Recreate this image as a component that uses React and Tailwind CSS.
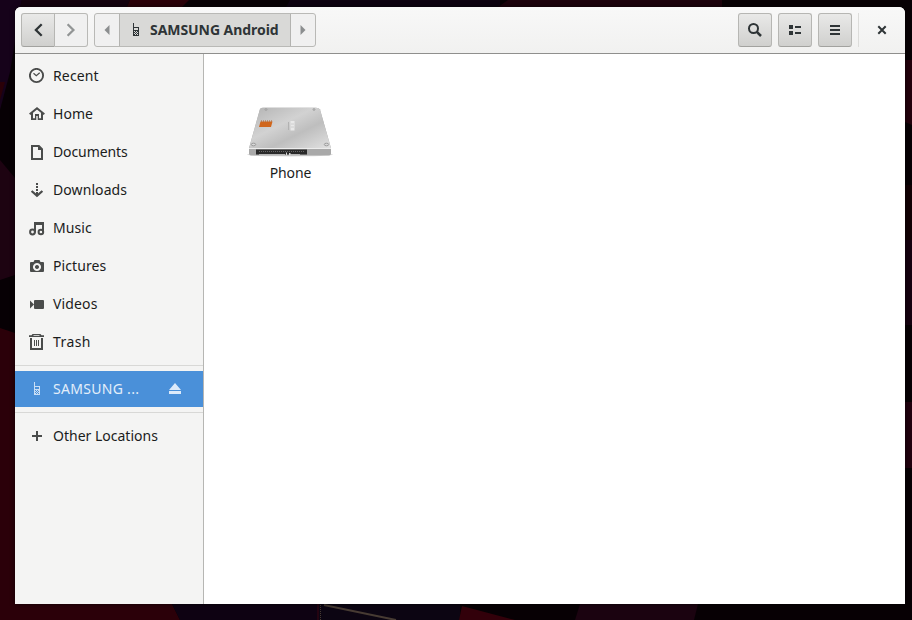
import React from "react";

const BODY = "font-['Noto_Sans','Open_Sans',sans-serif]";

function Icon({ children, className = "text-[#4a4c4b]", size = 16 }) {
  return (
    <svg width={size} height={size} viewBox="0 0 16 16" fill="currentColor" className={"shrink-0 " + className}>
      {children}
    </svg>
  );
}

const Phone = () => (
  <g shapeRendering="crispEdges">
    <path d="M5 1h1v4h-1z" />
    <path fillRule="evenodd" d="M5 5h6v9h-6zM6 6v2h4v-2zM6 9v1h1v-1zM8 9v1h1v-1zM7 10v1h1v-1zM9 10v1h1v-1zM6 11v1h1v-1zM8 11v1h1v-1zM7 12v1h1v-1zM9 12v1h1v-1z" />
  </g>
);

const icons = {
  recent: (
    <>
      <circle cx="7.500" cy="7.500" r="6.600" fill="none" stroke="currentColor" strokeWidth="1.900" />
      <path d="M4.500 5.200L7.300 7.800L10.700 4.800" fill="none" stroke="currentColor" strokeWidth="1.200" />
    </>
  ),
  home: (
    <>
      <path d="M.7 8.300L8 2.300L15.300 8.300" fill="none" stroke="currentColor" strokeWidth="2.100" />
      <path d="M2 7h2v5.200h2v-4.200h4v4.200h2v-5.200h2v7h-5.300v-4h-1.400v4h-5.300z" />
    </>
  ),
  documents: (
    <path fillRule="evenodd" d="M2 1h8.300l3.700 3.700v11.300h-12zM4 3v11h8v-8h-3v-3z" />
  ),
  downloads: (
    <>
      <path d="M7 1h2v2h-2zM7 4h2v2h-2zM7 7h2v2h-2zM7 10h2v3h-2z" />
      <path d="M2.600 9L8 13.800L13.400 9" fill="none" stroke="currentColor" strokeWidth="2.300" />
    </>
  ),
  music: (
    <>
      <path d="M5 2h10v10h-2v-7h-6v7.500h-2z" />
      <circle cx="3.500" cy="12" r="2.400" fill="none" stroke="currentColor" strokeWidth="2" />
      <circle cx="11.900" cy="12" r="2.300" fill="none" stroke="currentColor" strokeWidth="2" />
    </>
  ),
  pictures: (
    <path fillRule="evenodd" d="M5.500 2h5l1 2h2.500q1 0 1 1v8q0 1-1 1h-12q-1 0-1-1v-8q0-1 1-1h2.500zM8 5a4 4 0 1 0 .01 0zM8 7a2 2 0 1 1-.01 0z" />
  ),
  videos: <path d="M1 4.500l4 4l-4 4zM6 4h8q1 0 1 1v7q0 1-1 1h-8q-1 0-1-1v-7q0-1 1-1z" />,
  trash: (
    <>
      <path fillRule="evenodd" d="M3.500 0h8l1 1.200h2.500v1.800h-15v-1.800h2.500zM4.500 1h6v.7h-6z" />
      <path d="M2 4v11h11v-11" fill="none" stroke="currentColor" strokeWidth="2" />
      <path d="M5 6h1v6h-1zM7 6h1v6h-1zM9 6h1v6h-1z" />
    </>
  ),
  plus: <path d="M7 3h2v4h4v2h-4v4h-2v-4h-4v-2h4z" />,
};

const places = [
  ["recent", "Recent", "tracking-[0.15px]"],
  ["home", "Home", "tracking-[0.050px]"],
  ["documents", "Documents", "tracking-[-0.1px]"],
  ["downloads", "Downloads", "tracking-[0.080px]"],
  ["music", "Music", "tracking-[0.1px]"],
  ["pictures", "Pictures", "tracking-[0.1px]"],
  ["videos", "Videos", "tracking-[0.15px]"],
  ["trash", "Trash", "tracking-[0.4px]"],
];

function Place({ icon, label, spacing = "" }) {
  return (
    <li className="flex h-[38px] items-center gap-2 pl-[14px] text-[#1b1c1c]">
      <Icon>{icons[icon]}</Icon>
      <span className={"pb-[2px] " + spacing}>{label}</span>
    </li>
  );
}

function ToolButton({ children, label, className = "" }) {
  return (
    <button
      aria-label={label}
      className={"flex h-[34px] w-[34px] items-center justify-center rounded-[3px] border border-[#b6b6b3] border-b-[#a2a29f] bg-linear-to-b from-[#e9e9e8] to-[#d0d0ce] text-[#2e3436] " + className}
    >
      {children}
    </button>
  );
}

function Drive() {
  return (
    <svg width="88" height="54" viewBox="0 0 88 54">
      <defs>
        <linearGradient id="metal" x1="0" y1="0" x2="1" y2="1">
          <stop offset="0" stopColor="#b2b2b2" />
          <stop offset=".4" stopColor="#d2d2d2" />
          <stop offset=".62" stopColor="#bebebe" />
          <stop offset="1" stopColor="#e2e2e2" />
        </linearGradient>
      </defs>
      <ellipse cx="44" cy="49.500" rx="43" ry="2" fill="#000" opacity=".14" />
      <path d="M14 4Q15 2.700 17 2.700H70Q73 2.700 74 4.500L85 43V48.500Q85 50.500 83 50.500H5Q3 50.500 3 48.500V43Z" fill="#a9a9a9" />
      <path d="M14 4Q15 2.700 17 2.700H70Q73 2.700 74 4.500L85 43.500H3Z" fill="url(#metal)" />
      <path d="M3 43.500H85" stroke="#ececec" strokeWidth="1" />
      <path d="M10 44.500H61V49.500H10Z" fill="#292929" />
      <path d="M13 46.500H59" stroke="#666" strokeWidth="1" strokeDasharray="1 1" />
      <path d="M13 49.500H39M44 49.500H54" stroke="#b5b5b5" strokeWidth="1" />
      <path d="M40 47.500h1v2.500h-1zM43 48h1.500v2.500h-1.500z" fill="#d9d9d9" />
      <path d="M14.500 16.500H26.500L25 22H13Z" fill="#d0661c" />
      <path d="M15 16H27" stroke="#a85c2a" strokeWidth="1" strokeDasharray="1 1" />
      <path d="M44.500 16h4v9.500h-4z" fill="#e9e9e9" />
      <path d="M45 19h3M45 22h3" stroke="#cecece" />
      <path d="M42.500 17v8" stroke="#b2b2b2" />
      <g fill="#d8d8d8" stroke="#8e8e8e" strokeWidth=".8">
        <circle cx="20" cy="4.500" r=".9" />
        <circle cx="68" cy="4.500" r=".9" />
        <ellipse cx="7.500" cy="39.500" rx="2.200" ry="1.300" />
        <ellipse cx="80.500" cy="39.500" rx="2.200" ry="1.300" />
      </g>
    </svg>
  );
}

function Wallpaper() {
  return (
    <svg width="912" height="620" viewBox="0 0 912 620" className="absolute inset-0">
      <rect width="912" height="620" fill="#070004" />
      <path d="M0 0H22L10 72L0 110Z" fill="#16021a" />
      <path d="M0 82L5 82L0 100Z" fill="#2a0008" />
      <path d="M0 160L15 178V275L0 280Z" fill="#1d0311" />
      <path d="M0 328L15 333V604H172L180 620H0Z" fill="#2b0009" />
      <path d="M22 0H130L127 7H20Z" fill="#14020e" />
      <path d="M130 0H189L182 7H127Z" fill="#2a0008" />
      <path d="M290 0H500V7H286Z" fill="#0d0210" />
      <path d="M508 0H722V7H498Z" fill="#1c020c" />
      <path d="M172 604H318V620H180Z" fill="#0e0212" />
      <path d="M318 604H460V620H318Z" fill="#0c0512" />
      <path d="M324 605L396 620" fill="none" stroke="#473b33" strokeWidth="2" />
      <path d="M320.500 605V620" stroke="#473b33" strokeWidth="1" strokeDasharray="1 1" />
      <path d="M318 604V620" stroke="#3a0410" />
      <path d="M462 606L515 620H459Z" fill="#32000a" />
      <path d="M580 604H698L694 620H575Z" fill="#1b0310" />
      <path d="M905 60H912V125L905 122Z" fill="#23000c" />
      <path d="M905 185H912V240H905Z" fill="#120004" />
      <path d="M905 240H912V325H905Z" fill="#15000f" />
      <path d="M905 402H912V468H905Z" fill="#20000e" />
    </svg>
  );
}

export default function App() {
  return (
    <div className={"relative h-[620px] w-[912px] overflow-hidden bg-black pl-[15px] pt-[7px] text-[14px] " + BODY}>
      <Wallpaper />
      <div className="relative flex h-[597px] w-[890px] flex-col overflow-hidden rounded-t-[6px] bg-white shadow-[0_0_5px_#000000a0]">
        <header className="flex h-[47px] shrink-0 items-start border-b border-[#8f8f8d] bg-linear-to-b from-[#f8f8f8] to-[#f1f1f0] pl-[6px] pt-[6px]">
          <div className="flex">
            <ToolButton label="Back" className="rounded-r-none">
              <svg width="16" height="16" fill="none" stroke="currentColor" strokeWidth="2.300"><path d="M11.700 2.300L5.900 8L11.700 13.700" /></svg>
            </ToolButton>
            <button aria-label="Forward" className="flex h-[34px] w-[33px] items-center justify-center rounded-r-[3px] border border-l-0 border-[#b9b9b6] bg-[#f0f0f0] text-[#929595]">
              <svg width="16" height="16" fill="none" stroke="currentColor" strokeWidth="2.300"><path d="M4.600 2.300L10.400 8L4.600 13.700" /></svg>
            </button>
          </div>
          <nav className="ml-[6px] flex h-[34px] w-[222px] rounded-[3px] border border-[#b9b9b6] bg-[#f0f0f0] text-[#8b8e8f]">
            <div className="flex w-[24px] items-center justify-center">
              <svg width="6" height="10" fill="currentColor"><path d="M5.500 0V10L.5 5Z" /></svg>
            </div>
            <div className="flex w-[172px] items-center border-x border-[#b3b3b0] bg-[#d9d9d7] pl-[8px] font-bold text-[#2e3436]">
              <Icon className="text-[#2e3436]"><Phone /></Icon>
              <span className="ml-[6px] whitespace-nowrap pb-[2px] tracking-[-0.060px]">SAMSUNG Android</span>
            </div>
            <div className="flex w-[24px] items-center justify-center">
              <svg width="6" height="10" fill="currentColor"><path d="M.5 0V10L5.500 5Z" /></svg>
            </div>
          </nav>
          <div className="ml-auto flex gap-[6px]">
            <ToolButton label="Search">
              <svg width="16" height="16" fill="none" stroke="currentColor"><circle cx="6.500" cy="6.500" r="4.500" strokeWidth="2" /><path d="M9.800 9.800L14 14" strokeWidth="2.500" /></svg>
            </ToolButton>
            <ToolButton label="View">
              <svg width="16" height="16" fill="currentColor"><path d="M2 3h4v4H2zM2 9h4v4H2zM8 4h6v2H8zM8 10h6v2H8z" /></svg>
            </ToolButton>
            <ToolButton label="Menu">
              <svg width="16" height="16" fill="currentColor"><path d="M3 3h10v2H3zM3 7h10v2H3zM3 11h10v2H3z" /></svg>
            </ToolButton>
            <div className="h-[34px] w-px bg-[#dcdcda]" />
            <button aria-label="Close" className="flex h-[34px] w-[40px] items-center justify-center pr-[6px] text-[#2e3436]">
              <svg width="16" height="16" fill="none" stroke="currentColor" strokeWidth="2"><path d="M4.300 4.300L11.700 11.700M11.700 4.300L4.300 11.700" /></svg>
            </button>
          </div>
        </header>
        <div className="flex min-h-0 flex-1">
          <aside className="w-[189px] shrink-0 border-r border-[#b6b6b3] bg-[#f4f4f3] pt-[3px]">
            <ul>
              {places.map(([icon, label, spacing]) => <Place key={icon} icon={icon} label={label} spacing={spacing} />)}
            </ul>
            <hr className="mb-[5px] mt-[4px] border-[#d8d8d6]" />
            <div className="flex h-[36px] items-center bg-[#4a90d9] pl-[14px] text-[#e3eefa]">
              <Icon className="text-[#c9def5]"><Phone /></Icon>
              <span className="ml-2 pb-[2px] tracking-[0.3px]">SAMSUNG ...</span>
              <svg width="16" height="16" fill="#dceafa" className="ml-auto mr-[20px]"><path d="M8 2L14 9H2ZM2 10H14V13H2Z" /></svg>
            </div>
            <hr className="mb-[4px] mt-[5px] border-[#d8d8d6]" />
            <ul>
              <Place icon="plus" label="Other Locations" />
            </ul>
          </aside>
          <main className="flex-1 pl-[42px] pt-[51px]">
            <figure className="flex w-[88px] flex-col items-center">
              <Drive />
              <figcaption className="mt-[4px] pl-[1px] leading-5 tracking-[-0.1px] text-[#1b1c1c]">Phone</figcaption>
            </figure>
          </main>
        </div>
      </div>
    </div>
  );
}
